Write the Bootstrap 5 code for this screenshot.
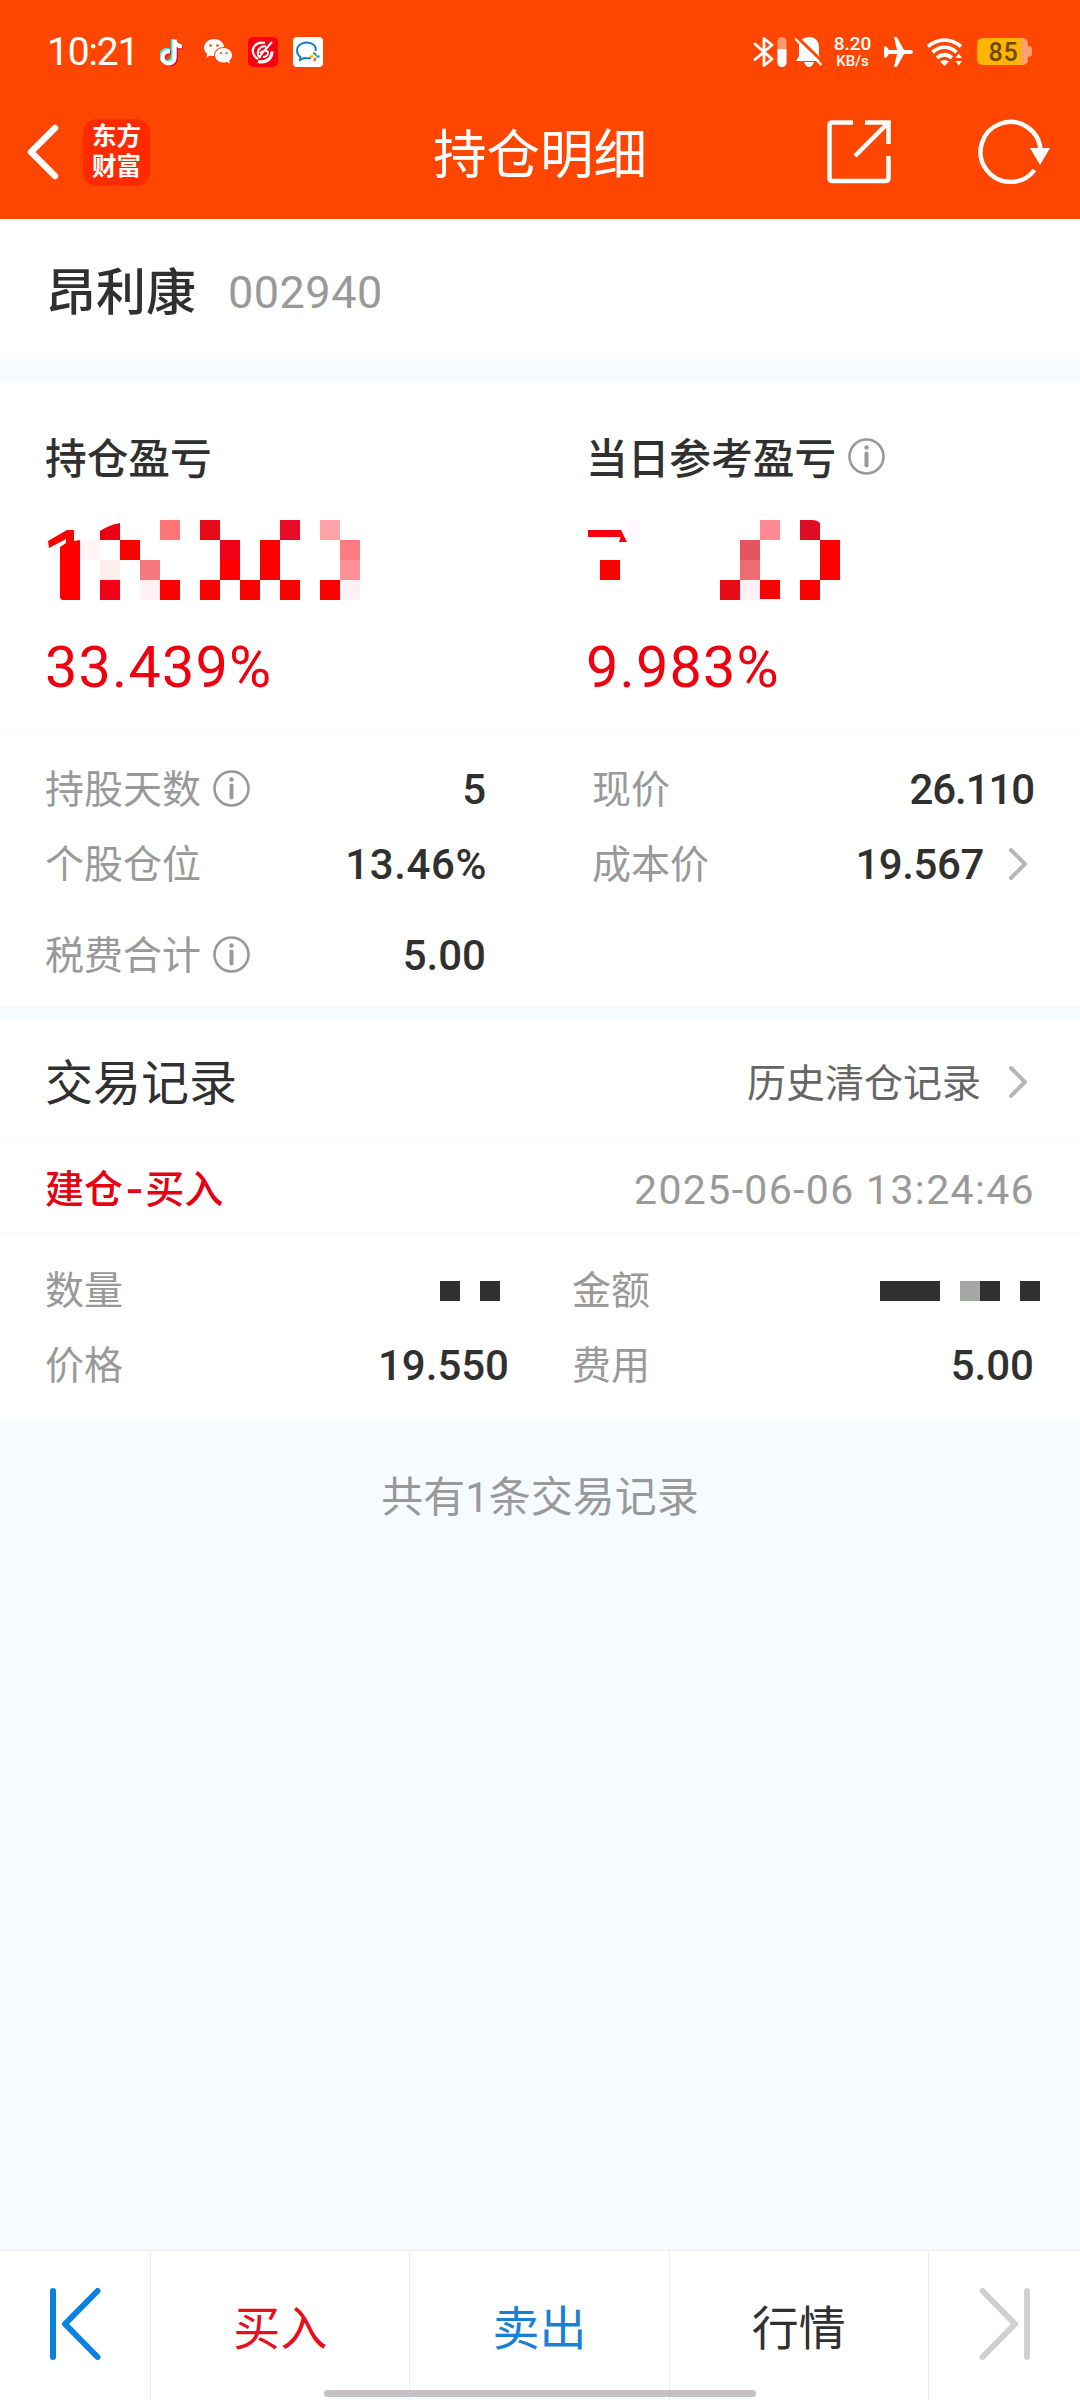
<!DOCTYPE html>
<html lang="zh-CN">
<head>
<meta charset="utf-8">
<meta name="viewport" content="width=device-width, initial-scale=1">
<title>持仓明细</title>
<link href="https://cdn.jsdelivr.net/npm/bootstrap@5.3.0/dist/css/bootstrap.min.css" rel="stylesheet">
<style>
body{font-family:Roboto,"Noto Sans CJK SC",sans-serif;background:#f5fbff;color:#303030;line-height:1;height:2400px;overflow:hidden}
svg{display:block;flex:none}
.app-head{background:#ff4600;color:#fff;height:219px}
.status-row{height:103px;padding:0 48px 0 47px}
.clock{font-size:39px;letter-spacing:-1.2px;width:113px;padding-top:1px}
.net-rate{width:39px;height:34px;font-size:19px;line-height:17px;text-align:center;font-weight:500}
.net-rate small{display:block;font-size:15px;line-height:18px;font-weight:500}
.title-row{height:98px;padding:0 28px 0 26px}
.page-title{font-size:53.5px;font-weight:400;line-height:60px;padding-top:7px}
.brand-logo{width:67px;height:67px;border-radius:14px;background:#ff2a00;font-size:24.5px;line-height:30px;font-weight:700;margin-left:23px}
.stock-head{height:140px;padding:7px 46px 0}
.stock-name{font-size:50px;font-weight:500;line-height:60px;margin-right:32px}
.stock-code{font-size:45px;color:#999;line-height:60px;letter-spacing:.5px}
.profit{height:352px;border-bottom:1px solid #f9f9f9;padding:48px 45px 0}
.profit-cell{width:541px}
.profit-label{font-size:41.7px;font-weight:500;height:58px;line-height:58px;white-space:nowrap}
.mosaic{margin:31px 0 34px -5px}
.mosaic-r{margin-left:-6px}
.pct{font-size:57.5px;line-height:68px;color:#f0000f;letter-spacing:1.2px}
.facts{height:271px;padding:17px 46px 0 45px}
.fact{height:75px;font-size:39px}
.fact.tall{height:107px}
.fact-l{width:441px}
.fact-r{margin-left:106px;flex:1}
.lbl{color:#999;line-height:50px;padding-top:1px}
.val{font-size:42px;font-weight:500;line-height:50px;padding-top:1px}
.tight{letter-spacing:-1.1px}
.snug{letter-spacing:-.4px}
.loose{letter-spacing:.6px;margin-right:-1px}
.ml-icon{margin-left:12px}
.facts .ml-icon{margin-top:-3px}
.chev{margin:-2px 6px 0 24px}
.sect-gap{height:24px}
.card-gap{height:14px}
.rec-head{height:122px;padding:7px 46px 0 45px;border-bottom:1px solid #f9f9f9}
.rec-title{font-size:48px;line-height:60px}
.rec-link{font-size:39px;color:#666;line-height:60px}
.rec-link .chev{margin-left:27px;margin-top:-4px}
.rec-kind{height:91px;padding:6px 46px 0 45px;border-bottom:1px solid #f9f9f9}
.kind{font-size:39px;font-weight:500;color:#e60012;line-height:50px}
.dash{display:inline-block;margin:0 4.5px;transform:scaleX(1.3)}
.stamp{font-size:41px;color:#999;line-height:50px;letter-spacing:1.35px;margin-right:-1px}
.rec-body{height:188px;padding:20px 46px 0 45px}
.rec-l{width:464px}
.rec-r{margin-left:63px;flex:1}
.total{color:#999;font-size:42px;line-height:50px;margin-top:52px}
.foot{height:150px;border-top:1px solid #e9edf0;font-size:47px}
.foot>div{border-right:1px solid #ececec;padding-top:5px}
.foot>div:last-child{border-right:0}
.foot .edge{width:151px;padding-top:0;padding-bottom:4px}
.c-buy{color:#e60f1c}.c-sell{color:#1880d6}
.home-pill{left:324px;bottom:3px;width:432px;height:7px;border-radius:4px;background:#c4c0c4}
</style>
</head>
<body class="d-flex flex-column position-relative">
<header class="app-head">
  <div class="status-row d-flex align-items-center">
    <div class="clock">10:21</div>
    <svg width="24" height="28" viewBox="0 0 24 28"><g fill="none" stroke-width="4.2"><path stroke="#25f4ee" d="M9 12.500a6 6 0 1 0 4 5.700V1c0 4 3.500 7 7 7"/><path stroke="#d0104a" d="M11 14.500a6 6 0 1 0 5 5.700V3c0 4 3.500 7 7 7"/><path stroke="#fff" d="M10 13.500a6 6 0 1 0 4.600 5.700V1.500c0 4 3.500 7 7.400 7"/></g></svg>
    <svg style="margin-left:20px" width="28" height="25" viewBox="0 0 28 25"><path fill="#fff" d="M10 0c5.500 0 9.800 3.500 10 8-5.500-.2-10.500 3.600-9.800 9-1.600.2-3.200 0-4.700-.6L2.500 19l.6-4.200C1.200 13.300 0 11 0 8.800 0 4 4.500 0 10 0z"/><path fill="#fff" d="M19.500 9c4.800 0 8.500 3.200 8.500 7.200 0 2.200-1 4-2.600 5.300l.4 3-2.700-1.600c-6 1.800-12-1.500-12-6.700C11.100 12.200 14.800 9 19.500 9z"/><g fill="#ff4600"><circle cx="6.500" cy="6.500" r="1.300"/><circle cx="13.500" cy="6.500" r="1.300"/><circle cx="17" cy="14" r="1.100"/><circle cx="22.500" cy="14" r="1.100"/></g></svg>
    <svg style="margin-left:16px" width="30" height="30" viewBox="0 0 30 30"><rect width="30" height="30" rx="5" fill="#fb0010"/><g fill="none" stroke="#fff"><path stroke-width="2.200" d="M17 6C8 4 3 11 5.500 17c1 3 2.500 4 4.500 5"/><path stroke-width="2" d="M24 5l-8 9c-4 5-5 6-4 7M18 9.500c-5-1-9 3-8 8 .5 2 2 3 3 2M12 16c3-3 8-3 8 0s-3 4-5 4"/><path stroke-width="3.200" d="M10 24.500c8 2 14-3 14-10"/></g></svg>
    <svg style="margin-left:15px" width="30" height="30" viewBox="0 0 30 30"><rect width="30" height="30" rx="4" fill="#fff"/><path fill="none" stroke="#0b7cc8" stroke-width="1.900" d="M22.500 14c1.500-5-3-8.500-9-8.500C8 5.500 4 9 4 13.500c0 3 1.500 5 3.500 6.500L7 23l4-2c3 .7 5 .4 7 0"/><path stroke="#28a745" stroke-width="2.200" d="M20.500 15.500l3 3"/><path stroke="#149bdc" stroke-width="2.200" d="M23.500 20l3-1"/><path stroke="#f7b500" stroke-width="2.400" d="M17 20l3-1"/><path stroke="#f0592b" stroke-width="2.400" d="M21 24l1.500-3"/></svg>
    <div class="d-flex align-items-center ms-auto">
      <svg width="34" height="30" viewBox="0 0 34 30"><path fill="none" stroke="#fff" stroke-width="2.800" stroke-linejoin="round" stroke-linecap="round" d="M2 7l17 15-8 6.500V1.500L19 8 2 22.500"/><rect x="24.500" width="9" height="30" rx="4.500" fill="#ff9a70"/><path fill="#fff" d="M24.500 12h9v13.500a4.500 4.500 0 0 1-9 0z"/></svg>
      <svg style="margin-left:8px" width="28" height="30" viewBox="0 0 28 30"><path fill="#fff" d="M14 0c6 0 10 4 10 10v8l3 6H1l3-5v-9C4 4 8 0 14 0zM9 25h10c-1 3-3 5-5 5s-4-2-5-5z"/><path stroke="#ff4600" stroke-width="3" d="M2 0l26 25"/><path stroke="#fff" stroke-width="2.200" d="M0 1.500l26.500 26.500"/></svg>
      <div class="net-rate" style="margin-left:10px">8.20<small>KB/s</small></div>
      <svg style="margin-left:12px" width="29" height="30" viewBox="0 0 29 30"><path fill="#fff" d="M10 0c2-.6 3 0 4 2l6 11h7c2.500 0 2.500 4 0 4h-7l-6 11c-1 2-2 2.600-4 2l3-13H5l-2.500 3.500H0v-11h2.500L5 13h8z"/></svg>
      <svg style="margin-left:14px" width="36" height="28" viewBox="0 0 36 28"><g fill="none" stroke="#fff" stroke-width="3.800"><path d="M1 8.500C11 0 24 0 34 8.500"/><path d="M5.500 14.200C13 7.700 22 7.700 29.500 14.200"/><path d="M10 19.800c5-4 10-4 15 0"/></g><path fill="#fff" d="M13 23.500c3-2 6-2 9 0L17.500 28zM28.500 20l3.200-4.500L35 20zM28.500 23l3.200 4.500L35 23z"/></svg>
      <svg style="margin-left:14px" width="55" height="27" viewBox="0 0 55 27"><path fill="#ffa070" d="M44 0c5 0 7 2 7 6v2c2 0 4 1 4 3v5c0 2-2 3-4 3v2c0 4-2 6-7 6z"/><path fill="#ffb400" d="M7 0h37v27H7c-5 0-7-2-7-7V7c0-5 2-7 7-7z"/><text x="26.500" y="22.500" text-anchor="middle" font-family="Roboto" font-weight="500" font-size="25" letter-spacing=".8" fill="#704800">85</text></svg>
    </div>
  </div>
  <div class="title-row d-flex align-items-center position-relative">
    <svg width="34" height="56" viewBox="0 0 34 56"><path d="M29 4L5 28l24 24" fill="none" stroke="#fff" stroke-width="6.500" stroke-linejoin="round" stroke-linecap="round"/></svg>
    <div class="brand-logo text-center d-flex flex-column justify-content-center"><span>东方</span><span>财富</span></div>
    <h1 class="page-title position-absolute start-0 end-0 text-center m-0">持仓明细</h1>
    <div class="d-flex align-items-center ms-auto">
      <svg width="64" height="64" viewBox="0 0 64 64"><g fill="none" stroke="#fff" stroke-width="4.500"><path d="M26 2.500H5.500q-3 0-3 3v52.500q0 3 3 3h53q3 0 3-3V36"/><path d="M38 2.500h23.500V24M28 36L61 3"/></g></svg>
      <svg style="margin:-3px 0 0 87px" width="74" height="66" viewBox="0 0 74 66"><path d="M56.500 52A30 30 0 1 1 62.500 32" fill="none" stroke="#fff" stroke-width="4.500"/><path fill="#fff" d="M52 30h20L62 47z"/></svg>
    </div>
  </div>
</header>

<section class="stock-head bg-white d-flex align-items-center">
  <div class="stock-name">昂利康</div><div class="stock-code">002940</div>
</section>
<div class="sect-gap"></div>

<section class="bg-white">
  <div class="profit d-flex">
    <div class="profit-cell">
      <div class="profit-label">持仓盈亏</div>
      <svg class="mosaic" width="340" height="80" viewBox="40 520 340 80" shape-rendering="crispEdges">
        <path fill="#f00" shape-rendering="auto" d="M48 541l19-11h7v11l6-1v60H62l-2-2v-51l6-4v-4l-17 9z"/>
        <path fill="#e90015" shape-rendering="auto" d="M100 540v-9q9-6 20-8v17z"/>
        <path fill="#ff7575" d="M160 520h20v20h-20z"/><path fill="#e80b18" d="M200 520h20v20h-20z"/><path fill="#e80b25" d="M280 520h20v20h-20z"/><path fill="#ffa3a8" d="M320 520h20v20h-20z"/>
        <path fill="#fff5f6" d="M80 540h20v20H80z"/><path fill="#f00" d="M120 540h20v20h-20zM260 540h20v40h-20zM220 560h20v20h-20zM160 580h20v20h-20zM200 580h20v20h-20zM240 580h20v20h-20zM280 580h20v20h-20zM320 580h20v20h-20z"/>
        <path fill="#f20018" d="M220 540h20v20h-20zM100 580h20v20h-20z"/><path fill="#ff7b80" d="M340 540h20v20h-20z"/><path fill="#ff9096" d="M340 560h20v20h-20z"/><path fill="#fee" d="M100 560h20v20h-20z"/><path fill="#f5787e" d="M140 560h20v20h-20z"/><path fill="#fff0f5" d="M140 580h20v20h-20zM340 580h20v20h-20z"/>
      </svg>
      <div class="pct">33.439%</div>
    </div>
    <div class="flex-fill">
      <div class="profit-label d-flex align-items-center">当日参考盈亏
        <svg class="ml-icon" style="margin-top:-7px" width="37" height="37" viewBox="0 0 37 37"><circle cx="18.500" cy="18.500" r="17" fill="none" stroke="#999" stroke-width="2.600"/><circle cx="18.500" cy="9.500" r="2.200" fill="#999"/><path d="M18.500 15.500v12" stroke="#999" stroke-width="4" stroke-linecap="round"/></svg></div>
      <svg class="mosaic mosaic-r" width="280" height="80" viewBox="580 520 280 80" shape-rendering="crispEdges">
        <path fill="#f5000c" shape-rendering="auto" d="M588 530h33l6 12h-8l1.500-5H588z"/><path fill="#fffaff" d="M628 520h12v20h-12z"/>
        <path fill="#ff8a91" d="M760 520h20v20h-20z"/><path fill="#e00e25" shape-rendering="auto" d="M800 520h12q5 0 8 3v17h-20z"/><path fill="#e6555c" d="M740 540h20v20h-20z"/><path fill="#ee6c70" d="M740 560h20v20h-20z"/><path fill="#f00" d="M600 560h20v20h-20zM820 540h20v40h-20zM760 580h20v19h-20zM800 580h20v20h-20z"/><path fill="#e80b18" d="M720 580h20v20h-20z"/><path fill="#fff0f5" d="M740 580h20v20h-20z"/>
      </svg>
      <div class="pct">9.983%</div>
    </div>
  </div>
  <div class="facts">
    <div class="fact d-flex align-items-center">
      <div class="fact-l d-flex align-items-center"><span class="lbl">持股天数</span><svg class="ml-icon" width="37" height="37" viewBox="0 0 37 37"><circle cx="18.500" cy="18.500" r="17" fill="none" stroke="#999" stroke-width="2.600"/><circle cx="18.500" cy="9.500" r="2.200" fill="#999"/><path d="M18.500 15.500v12" stroke="#999" stroke-width="4" stroke-linecap="round"/></svg><span class="val ms-auto">5</span></div>
      <div class="fact-r d-flex align-items-center"><span class="lbl">现价</span><span class="val tight ms-auto">26.110</span></div>
    </div>
    <div class="fact d-flex align-items-center">
      <div class="fact-l d-flex align-items-center"><span class="lbl">个股仓位</span><span class="val loose ms-auto">13.46%</span></div>
      <div class="fact-r d-flex align-items-center"><span class="lbl">成本价</span><span class="val snug ms-auto">19.567</span><svg class="chev" width="20" height="34" viewBox="0 0 20 34"><path d="M3 3l14 14L3 31" fill="none" stroke="#b8b4b8" stroke-width="4" stroke-linecap="round" stroke-linejoin="round"/></svg></div>
    </div>
    <div class="fact tall d-flex align-items-center">
      <div class="fact-l d-flex align-items-center"><span class="lbl">税费合计</span><svg class="ml-icon" width="37" height="37" viewBox="0 0 37 37"><circle cx="18.500" cy="18.500" r="17" fill="none" stroke="#999" stroke-width="2.600"/><circle cx="18.500" cy="9.500" r="2.200" fill="#999"/><path d="M18.500 15.500v12" stroke="#999" stroke-width="4" stroke-linecap="round"/></svg><span class="val ms-auto">5.00</span></div>
    </div>
  </div>
</section>
<div class="card-gap"></div>

<section class="bg-white">
  <div class="rec-head d-flex align-items-center justify-content-between">
    <div class="rec-title">交易记录</div>
    <div class="rec-link d-flex align-items-center">历史清仓记录<svg class="chev" width="20" height="34" viewBox="0 0 20 34"><path d="M3 3l14 14L3 31" fill="none" stroke="#b8b4b8" stroke-width="4" stroke-linecap="round" stroke-linejoin="round"/></svg></div>
  </div>
  <div class="rec-kind d-flex align-items-center justify-content-between"><span class="kind">建仓<span class="dash">-</span>买入</span><span class="stamp">2025-06-06 13:24:46</span></div>
  <div class="rec-body">
    <div class="fact d-flex align-items-center">
      <div class="rec-l d-flex align-items-center"><span class="lbl">数量</span><svg class="ms-auto" style="margin-right:9px" width="60" height="20" fill="#303030" shape-rendering="crispEdges"><path d="M0 0h20v20H0zM40 0h20v20H40z"/></svg></div>
      <div class="rec-r d-flex align-items-center"><span class="lbl">金额</span><svg class="ms-auto" style="margin-right:-6px" width="160" height="20" fill="#303030" shape-rendering="crispEdges"><path d="M0 0h60v20H0zM100 0h20v20h-20zM140 0h20v20h-20z"/><path fill="#a5a7a5" d="M80 0h20v20H80z"/></svg></div>
    </div>
    <div class="fact d-flex align-items-center">
      <div class="rec-l d-flex align-items-center"><span class="lbl">价格</span><span class="val ms-auto">19.550</span></div>
      <div class="rec-r d-flex align-items-center"><span class="lbl">费用</span><span class="val ms-auto">5.00</span></div>
    </div>
  </div>
</section>
<div class="total text-center">共有1条交易记录</div>

<footer class="foot bg-white d-flex mt-auto">
  <div class="edge d-flex align-items-center justify-content-center"><svg width="54" height="74" viewBox="0 0 54 74"><path d="M5 4v66M49.500 4L17 37l32.500 33" fill="none" stroke="#0a82e0" stroke-width="6" stroke-linecap="round" stroke-linejoin="round"/></svg></div>
  <div class="flex-fill c-buy d-flex align-items-center justify-content-center">买入</div>
  <div class="flex-fill c-sell d-flex align-items-center justify-content-center">卖出</div>
  <div class="flex-fill d-flex align-items-center justify-content-center">行情</div>
  <div class="edge d-flex align-items-center justify-content-center"><svg width="54" height="74" viewBox="0 0 54 74"><path d="M50 4v66M5.500 4L38 37 5.500 70" fill="none" stroke="#d0d0d0" stroke-width="6" stroke-linecap="round" stroke-linejoin="round"/></svg></div>
</footer>
<div class="home-pill position-absolute"></div>
<script src="https://cdn.jsdelivr.net/npm/bootstrap@5.3.0/dist/js/bootstrap.bundle.min.js"></script>
</body>
</html>
